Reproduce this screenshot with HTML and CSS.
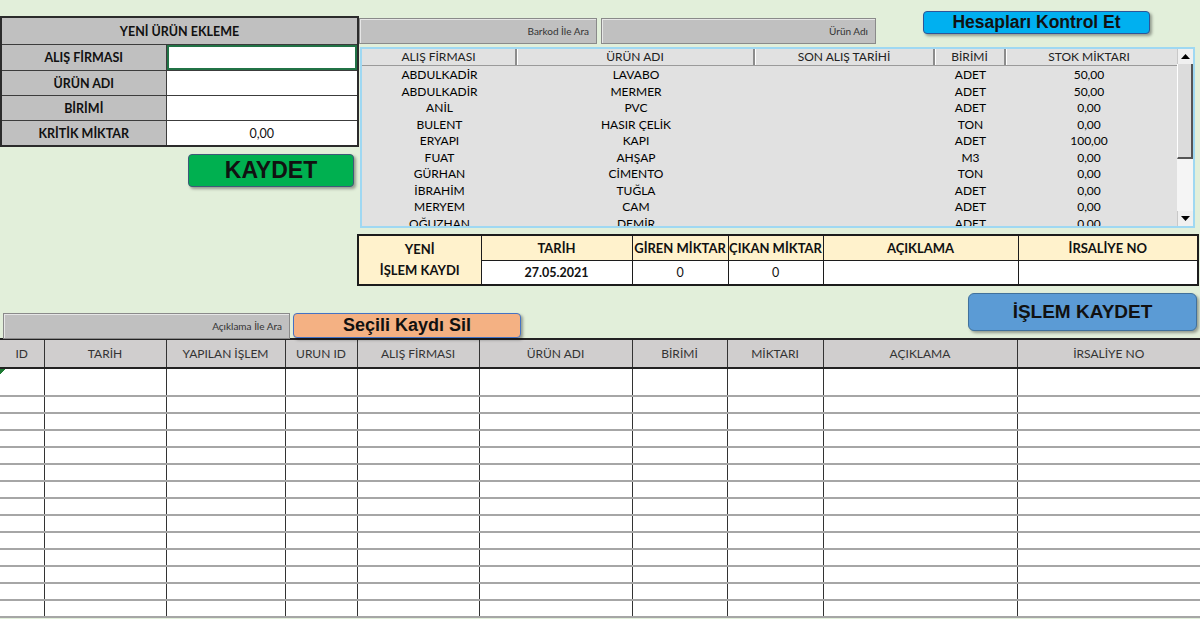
FILE: index.html
```html
<!DOCTYPE html>
<html lang="tr">
<head>
  <meta charset="UTF-8" />
  <title>Stok Takip</title>
  <link rel="stylesheet" href="styles.css">
</head>
<body>
  <div class="ust">
    <!-- yeni ürün formu -->
    <div class="urun-ekle">
      <table class="form-tablo">
        <colgroup><col class="f-etiket"><col class="f-deger"></colgroup>
        <tr><td class="baslik" colspan="2">YENİ ÜRÜN EKLEME</td></tr>
        <tr class="ilk"><td class="etiket">ALIŞ FİRMASI</td><td class="deger secili"></td></tr>
        <tr><td class="etiket">ÜRÜN ADI</td><td class="deger"></td></tr>
        <tr><td class="etiket">BİRİMİ</td><td class="deger"></td></tr>
        <tr><td class="etiket">KRİTİK MİKTAR</td><td class="deger">0,00</td></tr>
      </table>
      <button class="btn btn-kaydet">KAYDET</button>
    </div>

    <div class="sag">
      <div class="arama-satiri">
        <div class="arama-kutu barkod">Barkod İle Ara</div>
        <div class="arama-kutu urun-adi">Ürün Adı</div>
        <button class="btn btn-kontrol">Hesapları Kontrol Et</button>
      </div>

      <!-- stok listesi -->
      <div class="liste">
        <div class="liste-icerik">
          <div class="liste-satir liste-baslik">
            <span>ALIŞ FİRMASI</span><span>ÜRÜN ADI</span><span>SON ALIŞ TARİHİ</span><span>BİRİMİ</span><span>STOK MİKTARI</span>
          </div>
          <div id="listeSatirlari"></div>
        </div>
        <div class="kaydirma">
          <div class="ok"><svg width="9" height="5" viewBox="0 0 9 5"><path d="M0 5 L4.5 0 L9 5 Z" fill="#000"/></svg></div>
          <div class="tutamac"></div>
          <div class="ray"></div>
          <div class="ok"><svg width="9" height="5" viewBox="0 0 9 5"><path d="M0 0 L4.5 5 L9 0 Z" fill="#000"/></svg></div>
        </div>
      </div>
    </div>
  </div>

  <!-- yeni işlem kaydı -->
  <table class="islem-tablo">
    <colgroup>
      <col class="c-yeni"><col class="c-tarih"><col class="c-giren"><col class="c-cikan"><col class="c-aciklama"><col class="c-irsaliye">
    </colgroup>
    <tr class="islem-baslik">
      <td class="yeni-islem" rowspan="2">YENİ<br>İŞLEM KAYDI</td>
      <td>TARİH</td><td>GİREN MİKTAR</td><td>ÇIKAN MİKTAR</td><td>AÇIKLAMA</td><td>İRSALİYE NO</td>
    </tr>
    <tr class="islem-deger">
      <td class="kalin">27.05.2021</td><td>0</td><td>0</td><td></td><td></td>
    </tr>
  </table>

  <div class="islem-satiri">
    <div class="arama-kutu aciklama-ara">Açıklama İle Ara</div>
    <button class="btn btn-sil">Seçili Kaydı Sil</button>
    <button class="btn btn-islem">İŞLEM KAYDET</button>
  </div>

  <!-- işlem geçmişi -->
  <table class="kayitlar">
    <colgroup>
      <col class="k1"><col class="k2"><col class="k3"><col class="k4"><col class="k5"><col class="k6"><col class="k7"><col class="k8"><col class="k9"><col class="k10">
    </colgroup>
    <thead>
      <tr>
        <th>ID</th><th>TARİH</th><th>YAPILAN İŞLEM</th><th>URUN ID</th><th>ALIŞ FİRMASI</th><th>ÜRÜN ADI</th><th>BİRİMİ</th><th>MİKTARI</th><th>AÇIKLAMA</th><th>İRSALİYE NO</th>
      </tr>
    </thead>
    <tbody id="kayitSatirlari"></tbody>
  </table>

  <script>
    const stoklar = [
      ["ABDULKADİR", "LAVABO", "", "ADET", "50,00"],
      ["ABDULKADİR", "MERMER", "", "ADET", "50,00"],
      ["ANİL", "PVC", "", "ADET", "0,00"],
      ["BULENT", "HASIR ÇELİK", "", "TON", "0,00"],
      ["ERYAPI", "KAPI", "", "ADET", "100,00"],
      ["FUAT", "AHŞAP", "", "M3", "0,00"],
      ["GÜRHAN", "CİMENTO", "", "TON", "0,00"],
      ["İBRAHİM", "TUĞLA", "", "ADET", "0,00"],
      ["MERYEM", "CAM", "", "ADET", "0,00"],
      ["OĞUZHAN", "DEMİR", "", "ADET", "0,00"]
    ];

    const liste = document.getElementById("listeSatirlari");
    stoklar.forEach((s) => {
      const satir = document.createElement("div");
      satir.className = "liste-satir";
      satir.innerHTML = s.map((d) => `<span>${d}</span>`).join("");
      liste.appendChild(satir);
    });

    const govde = document.getElementById("kayitSatirlari");
    for (let i = 0; i < 14; i++) {
      const tr = document.createElement("tr");
      if (i === 0) tr.className = "ilk-kayit";
      tr.innerHTML = "<td></td>".repeat(10);
      govde.appendChild(tr);
    }
  </script>
</body>
</html>
```

FILE: styles.css
```css
body {
  margin: 0;
  width: 1200px;
  height: 619px;
  overflow: hidden;
  background: #e2efda;
  font-family: Lato, 'Open Sans', sans-serif;
  color: #111;
}
.ust {
  display: flex;
  align-items: flex-start;
}
.urun-ekle {
  width: 357px;
  margin-top: 16px;
}
.form-tablo {
  width: 357px;
  border-collapse: collapse;
  table-layout: fixed;
  border: 2px solid #2b2b2b;
}
.f-etiket { width: 165px; }
.f-deger { width: 192px; }
.form-tablo td {
  border: 1px solid #3c3c3c;
  padding: 0;
  font-size: 12.5px;
  font-weight: bold;
  text-align: center;
  height: 24px;
}
.form-tablo .baslik {
  background: #c0c0c0;
  height: 26px;
}
.form-tablo .etiket {
  background: #c0c0c0;
}
.form-tablo .deger {
  background: #fff;
  font-weight: normal;
  font-size: 12.5px;
}
.form-tablo .ilk td {
  height: 25px;
}
.form-tablo .secili {
  box-shadow: inset 0 0 0 2px #217346;
}
.btn {
  display: flex;
  align-items: center;
  justify-content: center;
  box-sizing: border-box;
  padding: 0;
  font-family: 'Liberation Sans', Arial, sans-serif;
  font-weight: bold;
  color: #111;
  border-radius: 4px;
  cursor: pointer;
  box-shadow: 2px 2px 3px rgba(0, 0, 0, 0.35);
}
.btn-kaydet {
  margin: 7px 0 0 188px;
  width: 166px;
  height: 33px;
  background: #00b050;
  border: 1px solid #3f5a78;
  font-size: 23px;
}
.sag {
  margin-left: 2px;
  width: 838px;
}
.arama-satiri {
  display: flex;
  align-items: flex-start;
}
.arama-kutu {
  display: flex;
  align-items: center;
  justify-content: flex-end;
  box-sizing: border-box;
  height: 26px;
  padding-right: 7px;
  background: #c0c0c0;
  border: 1px solid #8a8a8a;
  box-shadow: inset 1px 1px 0 #e6e6e6;
  font-size: 10px;
  color: #333;
}
.barkod {
  margin-top: 18px;
  width: 238px;
}
.urun-adi {
  margin: 18px 0 0 4px;
  width: 275px;
}
.btn-kontrol {
  margin: 11px 0 0 47px;
  width: 227px;
  height: 23px;
  background: #00b0f0;
  border: 1px solid #2f5597;
  font-size: 17.5px;
}
.liste {
  display: flex;
  margin: 3px 0 0 1px;
  width: 835px;
  height: 181px;
  box-sizing: border-box;
  border: 2px solid #9fd8f2;
  background: #e1e1e1;
  overflow: hidden;
}
.liste-icerik {
  flex: 1;
}
.liste-satir {
  display: grid;
  grid-template-columns: 155px 238px 180px 71px 166px;
  height: 16.5px;
  font-size: 12px;
  line-height: 17px;
  text-align: center;
  white-space: nowrap;
  color: #000;
}
.liste-baslik {
  height: 16px;
  line-height: 15px;
  border-bottom: 1px solid #9a9a9a;
  background: #e1e1e1;
  color: #222;
}
.liste-baslik span {
  border-right: 2px solid #8c8c8c;
  box-shadow: 1px 0 0 #fff;
}
.liste-baslik span:last-child {
  border-right: none;
  box-shadow: none;
}
.kaydirma {
  display: flex;
  flex-direction: column;
  width: 16px;
  background: #f2f2f2;
}
.ok {
  display: flex;
  align-items: center;
  justify-content: center;
  height: 15px;
  background: #f0f0f0;
  border-left: 1px solid #c8c8c8;
}
.tutamac {
  height: 95px;
  background: #dcdcdc;
  border-right: 2px solid #555;
  border-bottom: 2px solid #555;
  border-left: 1px solid #fff;
  box-sizing: border-box;
}
.ray {
  flex: 1;
  background: #f5f5f5;
}
.islem-tablo {
  margin: 6px 0 0 357px;
  width: 840px;
  border-collapse: collapse;
  table-layout: fixed;
  border: 2px solid #1c1c1c;
}
.c-yeni { width: 123px; }
.c-tarih { width: 151px; }
.c-giren { width: 96px; }
.c-cikan { width: 95px; }
.c-aciklama { width: 195px; }
.c-irsaliye { width: 180px; }
.islem-tablo td {
  border: 1px solid #1c1c1c;
  padding: 0;
  font-size: 13px;
  text-align: center;
  white-space: nowrap;
}
.islem-baslik td {
  height: 24px;
  background: #fff2cc;
  font-weight: bold;
}
.islem-tablo .yeni-islem {
  background: #fff2cc;
  font-weight: bold;
  line-height: 21px;
}
.islem-deger td {
  height: 23px;
  background: #fff;
  font-size: 12.5px;
}
.islem-deger .kalin {
  font-weight: bold;
}
.islem-satiri {
  display: flex;
  align-items: flex-start;
  height: 52px;
}
.aciklama-ara {
  margin: 27px 0 0 3px;
  width: 287px;
}
.btn-sil {
  margin: 27px 0 0 3px;
  width: 228px;
  height: 25px;
  background: #f4b183;
  border: 1px solid #4472c4;
  font-size: 18px;
}
.btn-islem {
  margin: 7px 3px 0 auto;
  width: 229px;
  height: 38px;
  background: #5b9bd5;
  border: 1px solid #41719c;
  border-radius: 6px;
  font-size: 19px;
}
.kayitlar {
  width: 1200px;
  border-collapse: collapse;
  table-layout: fixed;
  border-top: 2px solid #222;
}
.k1 { width: 44px; }
.k2 { width: 122px; }
.k3 { width: 119px; }
.k4 { width: 72px; }
.k5 { width: 122px; }
.k6 { width: 153px; }
.k7 { width: 95px; }
.k8 { width: 96px; }
.k9 { width: 194px; }
.k10 { width: 183px; }
.kayitlar th {
  height: 27px;
  padding: 0;
  background: #d0cece;
  border-left: 1px solid #333;
  border-bottom: 2px solid #222;
  font-size: 12px;
  font-weight: normal;
  color: #333;
}
.kayitlar th:first-child,
.kayitlar td:first-child {
  border-left: none;
}
.kayitlar td {
  height: 15px;
  padding: 0;
  background: #fff;
  border-left: 1px solid #333;
  border-bottom: 2px solid #a6a6a6;
}
.kayitlar .ilk-kayit td {
  height: 26px;
}
.kayitlar .ilk-kayit td:first-child {
  background: linear-gradient(135deg, #1e7b34 4px, #fff 4px);
}
```
